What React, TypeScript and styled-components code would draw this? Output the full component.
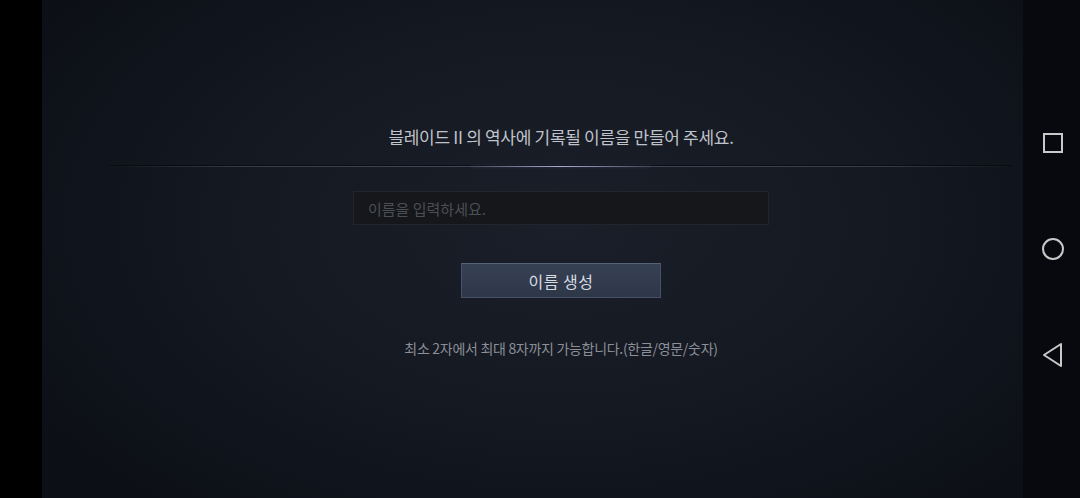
import React from 'react';
import styled, {createGlobalStyle} from 'styled-components';

const GlobalStyle = createGlobalStyle`
  html, body {
    margin: 0;
    padding: 0;
    background: #000000;
  }
  * {
    box-sizing: border-box;
  }
`;

const Screen = styled.div`
  display: flex;
  width: 1080px;
  height: 498px;
  overflow: hidden;
  background: #000000;
  font-family: "Noto Sans CJK KR", "Noto Sans", sans-serif;
`;

const Notch = styled.div`
  width: 42px;
  flex-shrink: 0;
  background: #000000;
`;

const Stage = styled.div`
  position: relative;
  flex: 1;
  display: flex;
  flex-direction: column;
  align-items: center;
  padding-top: 125px;
  background:
    radial-gradient(ellipse 60% 75% at 50% 45%, #1a1f29 0%, #141821 55%, #0c0f16 100%);
`;

const Title = styled.h1`
  margin: 0;
  height: 24px;
  line-height: 24px;
  font-size: 17px;
  font-weight: 400;
  color: #c0c3ca;
  letter-spacing: -0.3px;
`;

const Divider = styled.div`
  align-self: stretch;
  margin: 17px 68px 0;
  height: 1px;
  background:
    linear-gradient(90deg,
      rgba(62, 68, 82, 0) 0%,
      rgba(62, 68, 82, 0.85) 15%,
      rgba(70, 76, 94, 0.95) 45%,
      rgba(62, 68, 82, 0.85) 85%,
      rgba(62, 68, 82, 0) 100%);
  box-shadow: 0 -1px 0 rgba(5, 7, 12, 0.7);

  &::after {
    content: "";
    display: block;
    margin: 0 auto;
    width: 180px;
    height: 1px;
    background: linear-gradient(90deg,
      rgba(160, 162, 200, 0) 0%,
      rgba(170, 172, 210, 1) 50%,
      rgba(160, 162, 200, 0) 100%);
    box-shadow: 0 0 3px rgba(140, 144, 200, 0.35);
  }
`;

const NameInput = styled.input`
  margin-top: 24px;
  width: 416px;
  height: 34px;
  padding: 0 14px;
  background: #16171b;
  border: 1px solid #22252b;
  outline: none;
  font-family: inherit;
  font-size: 15px;
  color: #c5c8ce;

  &::placeholder {
    color: #4b4e55;
  }
`;

const CreateButton = styled.button`
  margin-top: 38px;
  width: 200px;
  height: 35px;
  background: linear-gradient(180deg, #364153 0%, #2e3748 100%);
  border: 1px solid #47526a;
  border-top-color: #56617a;
  font-family: inherit;
  font-size: 16px;
  color: #d9dce2;
  letter-spacing: 0.5px;
  cursor: pointer;
`;

const Hint = styled.p`
  margin: 40px 0 0;
  line-height: 20px;
  font-size: 14px;
  color: #8b8f97;
  letter-spacing: -0.3px;
`;

const NavBar = styled.nav`
  position: absolute;
  top: 0;
  right: 0;
  width: 57px;
  height: 100%;
  display: flex;
  flex-direction: column;
  align-items: center;
  justify-content: space-between;
  padding: 131px 0 131px;
  background: #07090e;
`;

const NavButton = styled.button`
  width: 24px;
  height: 24px;
  padding: 0;
  background: none;
  border: none;
  display: flex;
  align-items: center;
  justify-content: center;
  margin-left: 2px;
`;

const App: React.FunctionComponent = () => {
  return (
    <>
      <GlobalStyle />
      <Screen>
        <Notch />
        <Stage>
          <Title>블레이드 II 의 역사에 기록될 이름을 만들어 주세요.</Title>
          <Divider />
          <NameInput placeholder="이름을 입력하세요." />
          <CreateButton>이름 생성</CreateButton>
          <Hint>최소 2자에서 최대 8자까지 가능합니다.(한글/영문/숫자)</Hint>
          <NavBar>
            <NavButton aria-label="recent">
              <svg width="22" height="22" viewBox="0 0 22 22">
                <rect x="2" y="2" width="18" height="18" fill="none" stroke="#c9c9c9" strokeWidth="2" />
              </svg>
            </NavButton>
            <NavButton aria-label="home">
              <svg width="24" height="24" viewBox="0 0 24 24">
                <circle cx="12" cy="12" r="10" fill="none" stroke="#c9c9c9" strokeWidth="2" />
              </svg>
            </NavButton>
            <NavButton aria-label="back">
              <svg width="24" height="26" viewBox="0 0 24 26">
                <path d="M20 2 L3 13 L20 24 Z" fill="none" stroke="#c9c9c9" strokeWidth="2" strokeLinejoin="round" />
              </svg>
            </NavButton>
          </NavBar>
        </Stage>
      </Screen>
    </>
  );
};

export default App;
